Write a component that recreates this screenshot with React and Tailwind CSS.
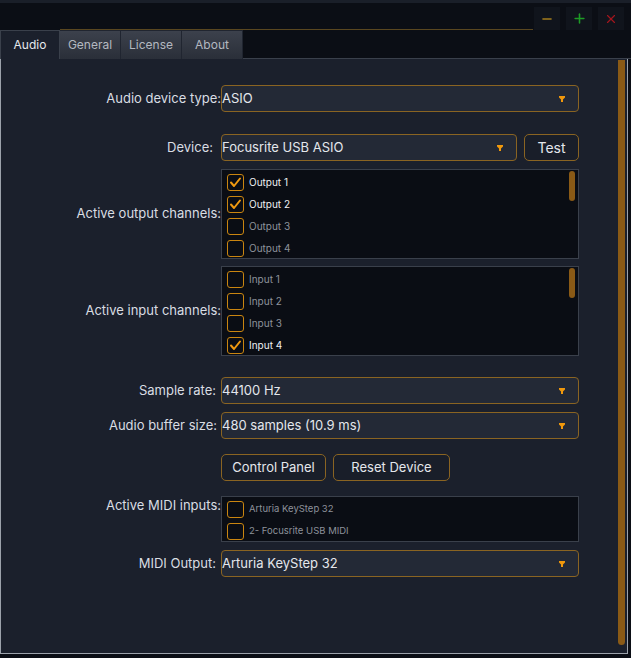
import { Minus, Plus, X } from "lucide-react";

const font = { fontFamily: "Inter, 'Noto Sans', sans-serif" };

const Arrow = () => (
  <svg width="6" height="6" viewBox="0 0 6 6" className="shrink-0 mr-[2px]">
    <polygon points="0,0 6,0 6,1.5 4,3.5 4,6 2,6 2,3.5 0,1.5" fill="#f0980c" />
  </svg>
);

const Combo = ({ value, className = "" }) => (
  <div
    className={
      "h-[27px] flex items-center justify-between pl-0 pr-[11px] rounded-[4px] border border-[#8a6422] bg-[#232936] text-[13px] text-[#e4e7ec] " +
      className
    }
  >
    <span>{value}</span>
    <Arrow />
  </div>
);

const Check = ({ on }) => (
  <div className="w-[17px] h-[17px] rounded-[3px] border-[1.5px] border-[#c98510] flex items-center justify-center shrink-0">
    {on && (
      <svg width="13" height="13" viewBox="0 0 13 13">
        <path d="M2 6.5 L5 10 L11 2.5" fill="none" stroke="#f09a10" strokeWidth="2" strokeLinecap="round" strokeLinejoin="round" />
      </svg>
    )}
  </div>
);

const ChannelList = ({ items, height, scroll = true, text = "text-[10px]" }) => (
  <div
    className="relative w-[358px] border border-[#3a404b] bg-[#0a0d14] pl-[5px] pt-[4px] flex flex-col gap-[5px]"
    style={{ height }}
  >
    {items.map(([name, on]) => (
      <div key={name} className="flex items-center gap-[5px] h-[17px]">
        <Check on={on} />
        <span className={text + " " + (on ? "text-[#eef0f3]" : "text-[#8d929b]")}>{name}</span>
      </div>
    ))}
    {scroll && (
      <div className="absolute right-[3px] top-[1px] w-[6px] h-[30px] rounded-full bg-[#8a5a16]" />
    )}
  </div>
);

const Row = ({ label, pr = "pr-[5px]", align = "items-center", children }) => (
  <div className={"flex " + align}>
    <div className={"w-[220px] text-right whitespace-nowrap text-[13px] text-[#d9dde3] " + pr}>{label}</div>
    {children}
  </div>
);

const Btn = ({ children, className = "" }) => (
  <div
    className={
      "h-[27px] flex items-center justify-center rounded-[5px] border border-[#8a6422] bg-[#191e29] text-[13px] text-[#e4e7ec] " +
      className
    }
  >
    {children}
  </div>
);

export default function App() {
  return (
    <div className="w-[631px] h-[658px] bg-[#0b0e15] flex flex-col" style={font}>
      <div className="h-[3px] bg-[#1a1f29]" />
      {/* title bar */}
      <div className="h-[27px] relative flex justify-end items-start pt-[4px] pr-[7px] gap-[6px]">
        <div className="absolute left-[60px] right-[98px] bottom-[0px] h-[1px] bg-[#5a4720]" />
        <div className="w-[26px] h-[23px] bg-[#10141c] flex items-center justify-center">
          <Minus size={14} color="#a37c1c" strokeWidth={2.5} />
        </div>
        <div className="w-[26px] h-[23px] bg-[#10141c] flex items-center justify-center">
          <Plus size={15} color="#1d9b25" strokeWidth={2.5} />
        </div>
        <div className="w-[26px] h-[23px] bg-[#10141c] flex items-center justify-center">
          <X size={14} color="#a3151d" strokeWidth={2} />
        </div>
      </div>
      {/* tabs */}
      <div className="flex h-[29px] text-[12px]">
        <div className="w-[60px] bg-[#1b202c] border-t border-l border-r border-[#3a404b] flex items-center justify-center text-[#e6e8ec]">
          Audio
        </div>
        {["General", "License", "About"].map((t) => (
          <div
            key={t}
            className="w-[61px] flex items-center justify-center bg-gradient-to-b from-[#3c414c] to-[#2a2f39] border-r border-t border-[#202530] text-[#b3b8c0]"
          >
            {t}
          </div>
        ))}
        <div className="flex-1 border-b border-[#3a404b]" />
      </div>
      {/* panel */}
      <div className="relative w-[628px] h-[595px] bg-[#1b202c] border-l border-r border-b border-[#9ca2ab] pt-[26px]">
        <div className="absolute right-[2px] top-[1px] bottom-[8px] w-[7px] rounded-b-full rounded-t-[3px] bg-[#8a5a16]" />
        <Row label="Audio device type:" pr="pr-0">
          <Combo value="ASIO" className="w-[358px]" />
        </Row>
        <div className="mt-[22px]">
          <Row label="Device:" pr="pr-[8px]">
            <Combo value="Focusrite USB ASIO" className="w-[296px]" />
            <Btn className="w-[55px] ml-[7px] text-[14px]">Test</Btn>
          </Row>
        </div>
        <div className="mt-[8px]">
          <Row label="Active output channels:" pr="pr-0">
            <ChannelList
              height={90}
              items={[["Output 1", true], ["Output 2", true], ["Output 3", false], ["Output 4", false]]}
            />
          </Row>
        </div>
        <div className="mt-[7px]">
          <Row label="Active input channels:" pr="pr-0">
            <ChannelList
              height={90}
              items={[["Input 1", false], ["Input 2", false], ["Input 3", false], ["Input 4", true]]}
            />
          </Row>
        </div>
        <div className="mt-[21px]">
          <Row label="Sample rate:">
            <Combo value="44100 Hz" className="w-[358px]" />
          </Row>
        </div>
        <div className="mt-[8px]">
          <Row label="Audio buffer size:" pr="pr-[4px]">
            <Combo value="480 samples (10.9 ms)" className="w-[358px]" />
          </Row>
        </div>
        <div className="mt-[15px] flex pl-[220px] gap-[7px]">
          <Btn className="w-[105px]">Control Panel</Btn>
          <Btn className="w-[117px]">Reset Device</Btn>
        </div>
        <div className="mt-[15px]">
          <Row label="Active MIDI inputs:" pr="pr-0" align="items-start">
            <ChannelList
              height={46}
              scroll={false}
              text="text-[9.5px]"
              items={[["Arturia KeyStep 32", false], ["2- Focusrite USB MIDI", false]]}
            />
          </Row>
        </div>
        <div className="mt-[8px]">
          <Row label="MIDI Output:">
            <Combo value="Arturia KeyStep 32" className="w-[358px]" />
          </Row>
        </div>
      </div>
    </div>
  );
}
